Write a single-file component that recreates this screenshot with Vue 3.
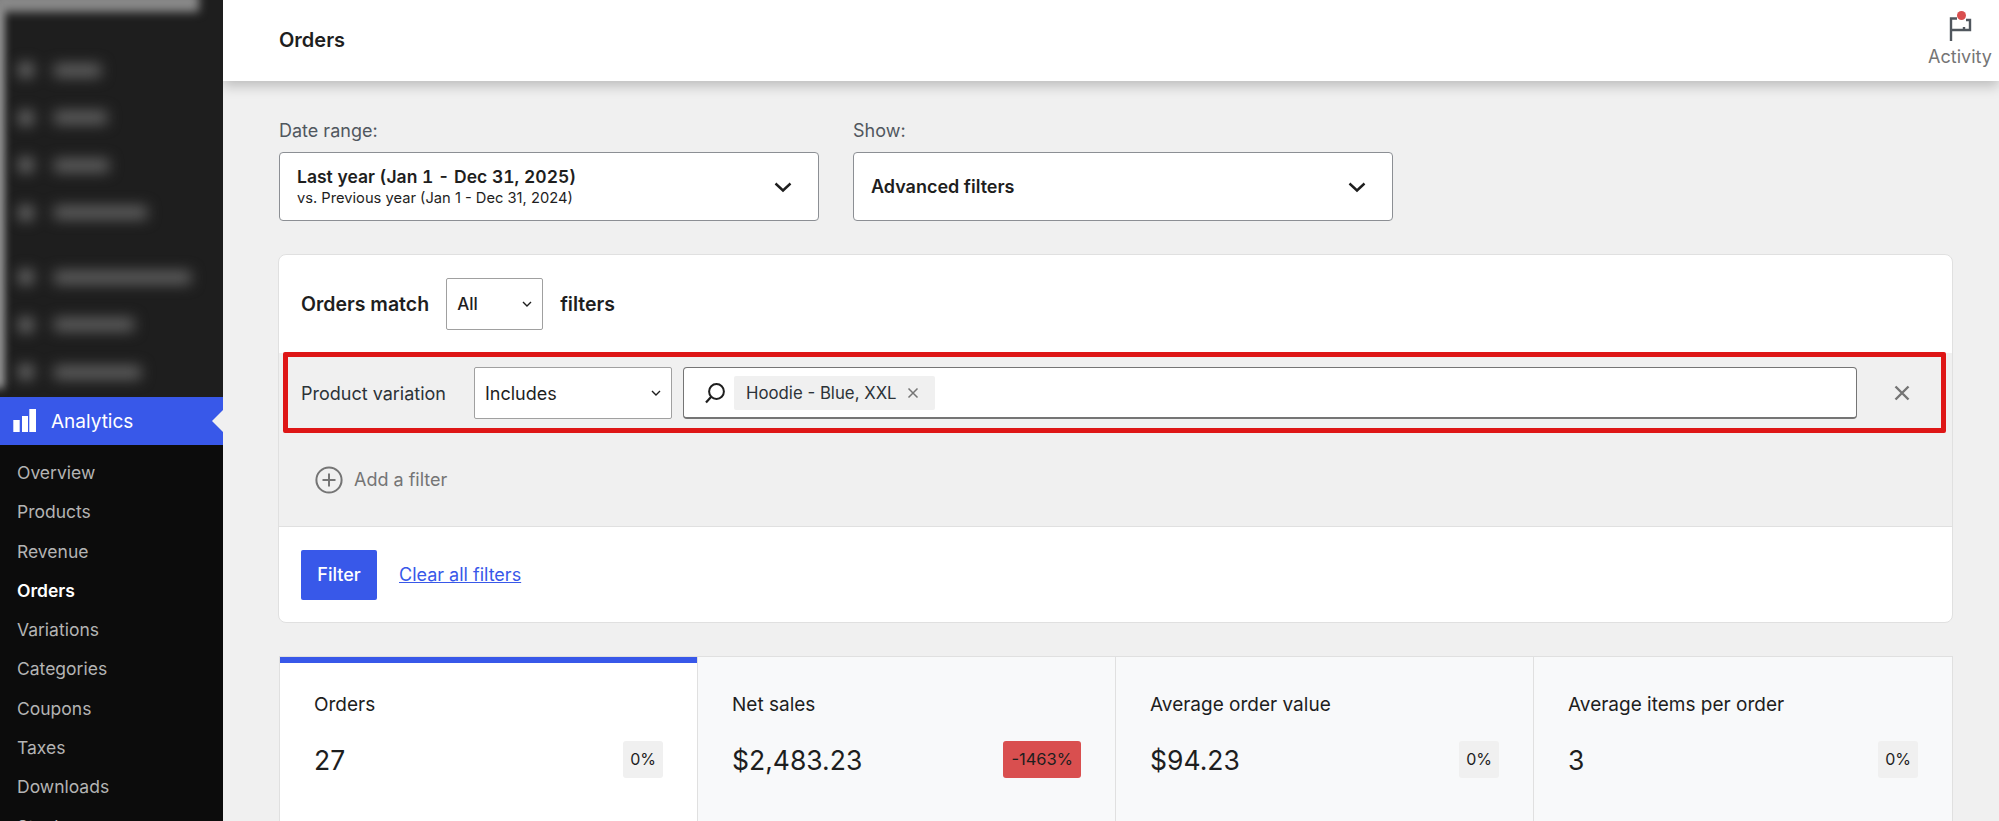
<script setup>
const blurred = [
  { label: 'Posts', w: 47 },
  { label: 'Media', w: 53 },
  { label: 'Pages', w: 55 },
  { label: 'Comments', w: 93 },
  { label: 'WooCommerce', w: 137, gap: true },
  { label: 'Products', w: 80 },
  { label: 'Payments', w: 87 },
]

const subnav = ['Overview', 'Products', 'Revenue', 'Orders', 'Variations', 'Categories', 'Coupons', 'Taxes', 'Downloads', 'Stock']

const metrics = [
  { label: 'Orders', value: '27', delta: '0%', active: true },
  { label: 'Net sales', value: '$2,483.23', delta: '-1463%', down: true },
  { label: 'Average order value', value: '$94.23', delta: '0%' },
  { label: 'Average items per order', value: '3', delta: '0%' },
]
</script>

<template>
  <div class="page">
    <aside class="sidebar">
      <div class="blur-wrap">
        <div class="blur-top"></div>
        <div class="blur-list">
          <div v-for="item in blurred" :key="item.label" class="blur-item" :class="{ spaced: item.gap }">
            <span class="blur-dot"></span>
            <span class="blur-text" :style="{ width: item.w + 'px' }"></span>
          </div>
        </div>
      </div>
      <div class="analytics">
        <svg class="bars" width="24" height="24" viewBox="0 0 24 24">
          <rect x="1.3" y="11" width="6.4" height="12" fill="#fff" />
          <rect x="10" y="7" width="6" height="16" fill="#fff" />
          <rect x="17.3" y="0" width="6.7" height="23" fill="#fff" />
        </svg>
        <span>Analytics</span>
      </div>
      <nav class="subnav">
        <a v-for="item in subnav" :key="item" :class="{ current: item === 'Orders' }">{{ item }}</a>
      </nav>
    </aside>

    <main class="main">
      <header class="topbar">
        <h1>Orders</h1>
        <div class="activity">
          <span class="flag">
            <svg width="23" height="24" viewBox="0 0 23 24">
              <path d="M2 24V1.5H8M2 13H21V3H17M15 13V10" fill="none" stroke="#50575e" stroke-width="2.4" />
            </svg>
            <i class="dot"></i>
          </span>
          <span class="activity-label">Activity</span>
        </div>
      </header>

      <div class="content">
        <div class="pickers">
          <div class="picker">
            <label>Date range:</label>
            <div class="picker-box">
              <div>
                <div class="picker-main range">Last year (Jan 1 - Dec 31, 2025)</div>
                <div class="picker-sub">vs. Previous year (Jan 1 - Dec 31, 2024)</div>
              </div>
              <svg class="chev" width="24" height="24" viewBox="0 0 24 24"><path d="M4.5 8.5 12 15.5 19.5 8.5" fill="none" stroke="#1e1e1e" stroke-width="2.4" /></svg>
            </div>
          </div>
          <div class="picker">
            <label>Show:</label>
            <div class="picker-box">
              <div class="picker-main">Advanced filters</div>
              <svg class="chev" width="24" height="24" viewBox="0 0 24 24"><path d="M4.5 8.5 12 15.5 19.5 8.5" fill="none" stroke="#1e1e1e" stroke-width="2.4" /></svg>
            </div>
          </div>
        </div>

        <section class="filters">
          <div class="match">
            <strong>Orders match</strong>
            <div class="select small">
              <span>All</span>
              <svg width="12" height="12" viewBox="0 0 12 12"><path d="M2 4 6 8 10 4" fill="none" stroke="#1e1e1e" stroke-width="1.4" /></svg>
            </div>
            <strong>filters</strong>
          </div>

          <div class="filter-row">
            <span class="filter-name">Product variation</span>
            <div class="select wide">
              <span>Includes</span>
              <svg width="12" height="12" viewBox="0 0 12 12"><path d="M2 4 6 8 10 4" fill="none" stroke="#1e1e1e" stroke-width="1.4" /></svg>
            </div>
            <div class="search">
              <svg class="search-icon" width="22" height="22" viewBox="0 0 22 22">
                <circle cx="11.5" cy="9.5" r="7.4" fill="none" stroke="#1e1e1e" stroke-width="2" />
                <path d="M6 15 1 20.5" fill="none" stroke="#1e1e1e" stroke-width="2.2" />
              </svg>
              <span class="tag">
                Hoodie - Blue, XXL
                <svg width="12" height="12" viewBox="0 0 12 12"><path d="M1.5 1.5 10.5 10.5M10.5 1.5 1.5 10.5" stroke="#757575" stroke-width="1.5" /></svg>
              </span>
            </div>
            <svg class="remove" width="20" height="20" viewBox="0 0 20 20"><path d="M3.5 3.5 16.5 16.5M16.5 3.5 3.5 16.5" stroke="#757575" stroke-width="2.4" /></svg>
          </div>

          <div class="add-row">
            <svg width="28" height="28" viewBox="0 0 28 28">
              <circle cx="14" cy="14" r="12.6" fill="none" stroke="#757575" stroke-width="2" />
              <path d="M14 7.5V20.5M7.5 14H20.5" stroke="#757575" stroke-width="2" />
            </svg>
            <span>Add a filter</span>
          </div>

          <div class="actions">
            <button class="filter-btn">Filter</button>
            <a class="clear">Clear all filters</a>
          </div>
        </section>

        <section class="metrics">
          <div v-for="m in metrics" :key="m.label" class="metric" :class="{ active: m.active }">
            <div class="metric-label">{{ m.label }}</div>
            <div class="metric-data">
              <span class="metric-value">{{ m.value }}</span>
              <span class="delta" :class="{ down: m.down }">{{ m.delta }}</span>
            </div>
          </div>
        </section>
      </div>
    </main>
  </div>
</template>

<style>
html, body {
  margin: 0;
  background: #f0f0f0;
}
</style>

<style scoped>
.page {
  display: flex;
  height: 821px;
  overflow: hidden;
  background: #f0f0f0;
  font-family: Inter, "Liberation Sans", sans-serif;
  color: #1e1e1e;
}

.sidebar {
  width: 223px;
  flex: none;
  background: #0c0c0c;
  display: flex;
  flex-direction: column;
  overflow: hidden;
  z-index: 2;
}

.blur-wrap {
  height: 397px;
  flex: none;
  background: #1e1e1e;
  position: relative;
  overflow: hidden;
}

.blur-top {
  position: absolute;
  left: -6px;
  top: -8px;
  width: 205px;
  height: 20px;
  background: #8a8a8a;
  filter: blur(5px);
}

.blur-wrap::before {
  content: '';
  position: absolute;
  left: -6px;
  top: 0;
  width: 10px;
  height: 388px;
  background: #a8a8a8;
  filter: blur(4px);
}

.blur-list {
  padding: 61px 0 0 18px;
  display: flex;
  flex-direction: column;
  gap: 29.5px;
}

.blur-item {
  display: flex;
  align-items: center;
  gap: 20px;
  height: 18px;
  filter: blur(7px);
}

.blur-item.spaced {
  margin-top: 17px;
}

.blur-dot {
  width: 16px;
  height: 16px;
  border-radius: 50%;
  background: #707070;
}

.blur-text {
  height: 13px;
  background: #626262;
}

.analytics {
  height: 48px;
  flex: none;
  background: #3858e9;
  color: #fff;
  display: flex;
  align-items: center;
  gap: 15px;
  padding-left: 12px;
  font-size: 19px;
  position: relative;
}

.analytics::after {
  content: '';
  position: absolute;
  right: 0;
  top: 13px;
  border: 11px solid transparent;
  border-right-color: #f0f0f0;
  border-left-width: 0;
}

.subnav {
  display: flex;
  flex-direction: column;
  padding: 8px 0 0 17px;
}

.subnav a {
  height: 39.3px;
  line-height: 39.3px;
  font-size: 17.5px;
  color: #b4b4b4;
  flex: none;
}

.subnav a.current {
  color: #fff;
  font-weight: 600;
}

.main {
  flex: 1;
  min-width: 0;
  display: flex;
  flex-direction: column;
}

.topbar {
  height: 81px;
  flex: none;
  box-sizing: border-box;
  background: #fff;
  box-shadow: 0 5px 12px rgba(0, 0, 0, 0.22);
  display: flex;
  align-items: center;
  justify-content: space-between;
  padding: 0 0 0 56px;
  position: relative;
}

.topbar h1 {
  margin: -2px 0 0;
  font-size: 20px;
  font-weight: 600;
}

.activity {
  width: 78px;
  align-self: flex-start;
  padding-top: 17px;
  display: flex;
  flex-direction: column;
  align-items: center;
}

.flag {
  position: relative;
  height: 24px;
  display: block;
}

.flag svg {
  display: block;
}

.dot {
  position: absolute;
  width: 9px;
  height: 9px;
  border-radius: 50%;
  background: #d94f4f;
  left: 8.5px;
  top: -6.5px;
}

.activity-label {
  font-size: 18px;
  line-height: 22px;
  color: #757575;
  margin-top: 5px;
}

.content {
  padding: 40px 46px 0 56px;
}

.pickers {
  display: flex;
  gap: 34px;
}

.picker {
  width: 540px;
}

.picker label {
  display: block;
  font-size: 18px;
  line-height: 20px;
  color: #50575e;
  margin-bottom: 11px;
}

.picker-box {
  height: 69px;
  box-sizing: border-box;
  border: 1px solid #8c8f94;
  border-radius: 4px;
  background: #fff;
  display: flex;
  align-items: center;
  justify-content: space-between;
  padding: 0 23px 0 17px;
}

.picker-main {
  font-size: 18px;
  font-weight: 600;
  line-height: 23px;
}

.picker-main.range {
  font-size: 17.5px;
  font-variant-numeric: tabular-nums;
}

.picker-sub {
  font-size: 14.7px;
  line-height: 21px;
}

.filters {
  margin: 33px 0 0 -1px;
  height: 369px;
  box-sizing: border-box;
  border: 1px solid #e0e0e0;
  border-radius: 8px;
  background: #fff;
  display: flex;
  flex-direction: column;
  overflow: hidden;
}

.match {
  height: 98px;
  flex: none;
  display: flex;
  align-items: center;
  gap: 17px;
  padding-left: 22px;
  font-size: 19.5px;
}

.match strong {
  font-weight: 600;
}

.select {
  height: 52px;
  box-sizing: border-box;
  border: 1px solid #a0a0a0;
  border-radius: 2px;
  background: #fff;
  display: flex;
  align-items: center;
  justify-content: space-between;
  padding: 0 9px 0 10px;
  font-size: 18px;
}

.select.small {
  width: 97px;
  font-size: 17px;
  font-weight: 500;
}

.select.wide {
  width: 198px;
}

.filter-row {
  height: 80px;
  flex: none;
  background: #f0f0f0;
  display: flex;
  align-items: center;
  padding-left: 22px;
  position: relative;
}

.filter-row::after {
  content: '';
  position: absolute;
  left: 4px;
  right: 6px;
  top: -1px;
  bottom: 0;
  border: 5px solid #de1616;
  border-radius: 2px;
  pointer-events: none;
}

.filter-name {
  width: 173px;
  flex: none;
  font-size: 18px;
  color: #2c3338;
}

.search {
  width: 1174px;
  height: 52px;
  margin-left: 11px;
  box-sizing: border-box;
  border: 1px solid #757575;
  border-bottom-width: 2px;
  border-radius: 4px;
  background: #fff;
  display: flex;
  align-items: center;
  padding-left: 21px;
  gap: 7px;
}

.search-icon {
  flex: none;
}

.tag {
  height: 34px;
  width: 201px;
  box-sizing: border-box;
  background: #f0f0f0;
  border-radius: 2px;
  display: flex;
  align-items: center;
  gap: 10px;
  padding: 0 0 0 12px;
  font-size: 16.8px;
  color: #2c3338;
  white-space: nowrap;
}

.remove {
  margin-left: 35px;
}

.add-row {
  height: 93px;
  flex: none;
  background: #f0f0f0;
  display: flex;
  align-items: center;
  gap: 11px;
  padding-left: 36px;
  font-size: 18px;
  color: #757575;
}

.actions {
  flex: 1;
  border-top: 1px solid #e0e0e0;
  display: flex;
  align-items: center;
  gap: 22px;
  padding-left: 22px;
}

.filter-btn {
  width: 76px;
  height: 50px;
  border: 0;
  border-radius: 2px;
  background: #3858e9;
  color: #fff;
  font: 500 18px Inter, "Liberation Sans", sans-serif;
}

.clear {
  font-size: 18px;
  color: #3858e9;
  text-decoration: underline;
}

.metrics {
  margin-top: 33px;
  height: 164px;
  display: grid;
  grid-template-columns: repeat(4, 1fr);
  border: 1px solid #e0e0e0;
  background: #f8f9fa;
}

.metric {
  padding: 36px 34px 0 34px;
  border-right: 1px solid #e0e0e0;
}

.metric:last-child {
  border-right: 0;
}

.metric.active {
  background: #fff;
  box-shadow: inset 0 6px 0 #3858e9;
}

.metric-label {
  font-size: 19px;
  line-height: 24px;
}

.metric-data {
  margin-top: 23px;
  display: flex;
  align-items: center;
  justify-content: space-between;
}

.metric-value {
  font-size: 26.5px;
  line-height: 37px;
  padding-top: 2px;
}

.delta {
  height: 37px;
  line-height: 37px;
  padding: 0 7px;
  border-radius: 3px;
  background: #f0f0f0;
  font-size: 16px;
}

.delta.down {
  padding: 0 8px;
  font-size: 16.5px;
  background: #d94f4f;
}
</style>
